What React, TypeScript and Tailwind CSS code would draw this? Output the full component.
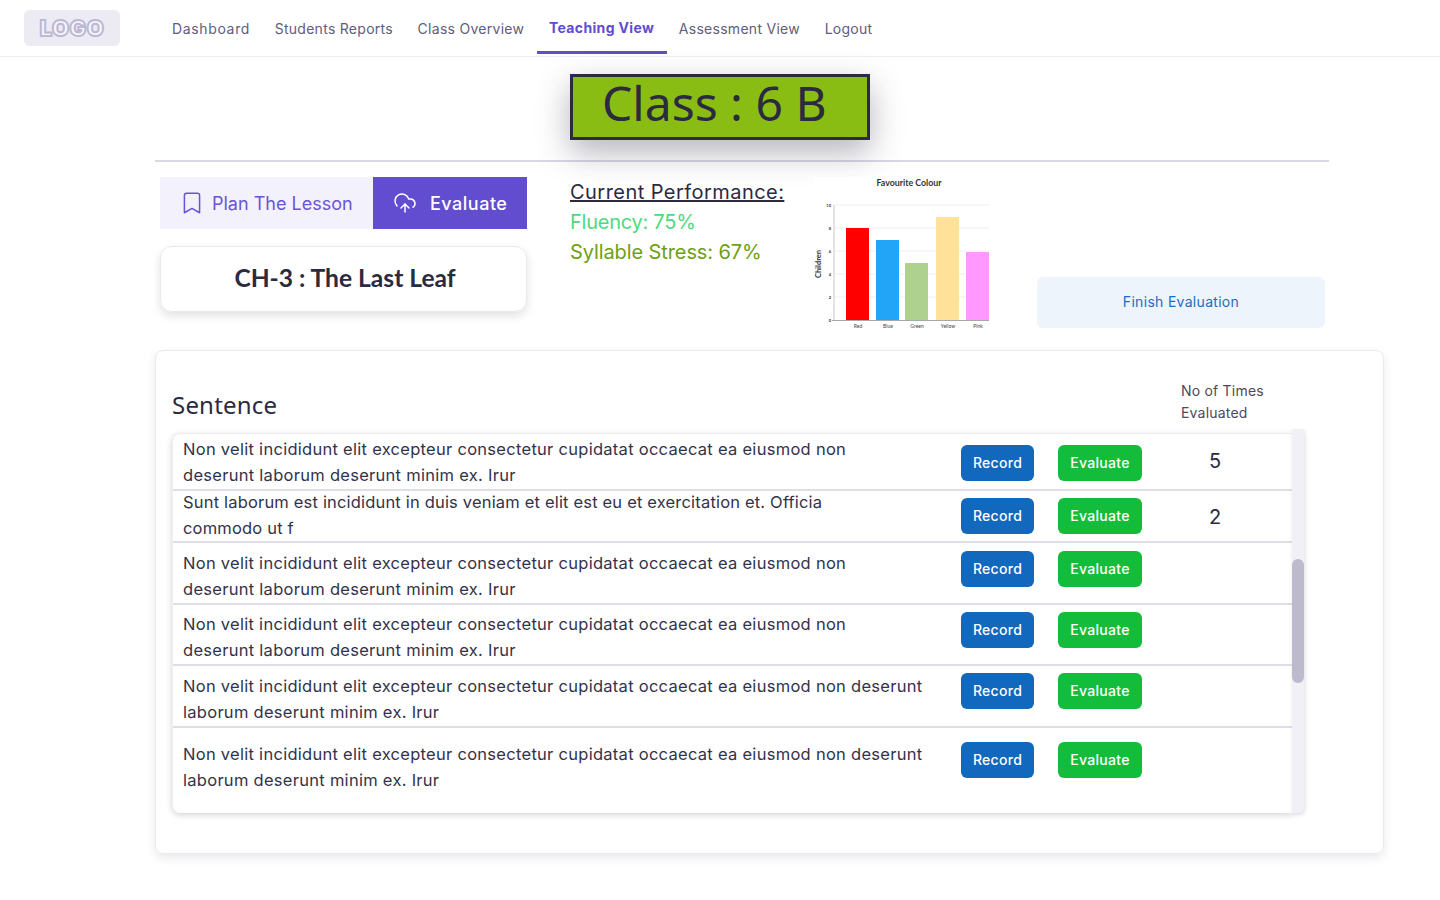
import { Bookmark, CloudUpload } from 'lucide-react';

const LONG_A = 'Non velit incididunt elit excepteur consectetur cupidatat occaecat ea eiusmod non deserunt laborum deserunt minim ex. Irur';
const LONG_B = 'Sunt laborum est incididunt in duis veniam et elit est eu et exercitation et. Officia commodo ut f';

const rows = [
  { text: LONG_A, h: 'h-[57px]', pad: 'pt-[2px]', btn: 'pt-[11px]', count: '5', countPad: 'pt-[11px]', textW: 'w-[680px] tracking-[0.28px]' },
  { text: LONG_B, h: 'h-[52px]', pad: '-mt-[2px]', btn: 'pt-[7px]', count: '2', countPad: 'pt-[10px]', textW: 'w-[680px] tracking-[0.18px]' },
  { text: LONG_A, h: 'h-[62px]', pad: 'pt-[7px]', btn: 'pt-[8px]', count: '', countPad: '', textW: 'w-[680px] tracking-[0.28px]' },
  { text: LONG_A, h: 'h-[61px]', pad: 'pt-[6px]', btn: 'pt-[7px]', count: '', countPad: '', textW: 'w-[680px] tracking-[0.28px]' },
  { text: LONG_A, h: 'h-[62px]', pad: 'pt-[7px]', btn: 'pt-[7px]', count: '', countPad: '', textW: 'w-[760px] tracking-[0.28px]' },
  { text: LONG_A, h: 'h-[86px]', pad: 'pt-[13px]', btn: 'pt-[14px]', count: '', countPad: '', textW: 'w-[760px] tracking-[0.28px]' },
];

const nav = ['Dashboard', 'Students Reports', 'Class Overview', 'Teaching View', 'Assessment View', 'Logout'];

function FavouriteChart() {
  const bars = [
    { x: 32, y: 51, h: 92, c: '#ff0000', l: 'Red' },
    { x: 62, y: 63, h: 80, c: '#22a5f7', l: 'Blue' },
    { x: 91, y: 86, h: 57, c: '#aed18f', l: 'Green' },
    { x: 122, y: 40, h: 103, c: '#ffe199', l: 'Yellow' },
    { x: 152, y: 75, h: 68, c: '#ff99ff', l: 'Pink' },
  ];
  return (
    <svg width="176" height="153" viewBox="0 0 176 153" className="bg-white shrink-0">
      <text x="95" y="9" textAnchor="middle" fontSize="8.8" fontWeight="700" fill="#333" fontFamily="Lato, sans-serif">Favourite Colour</text>
      {[28, 51, 74, 97, 120].map((y) => (
        <line key={y} x1="20" x2="175" y1={y} y2={y} stroke="#eeeeee" />
      ))}
      <line x1="20" x2="20" y1="28" y2="144" stroke="#c8c8c8" />
      <line x1="18" x2="175" y1="143.5" y2="143.5" stroke="#a8a8a8" />
      {bars.map((b) => (
        <g key={b.l}>
          <rect x={b.x} y={b.y} width="23" height={b.h} fill={b.c} />
          <text x={b.x + 12} y="151" textAnchor="middle" fontSize="5" fill="#444" fontFamily="Lato, sans-serif">{b.l}</text>
        </g>
      ))}
      {[['10', 30], ['8', 53], ['6', 76], ['4', 99], ['2', 122], ['0', 145]].map(([t, y]) => (
        <text key={t} x="17" y={y} textAnchor="end" fontSize="4" fontWeight="700" fill="#333" fontFamily="Lato, sans-serif">{t}</text>
      ))}
      <text transform="translate(7 87) rotate(-90)" textAnchor="middle" fontSize="7.5" fontWeight="700" fill="#333" fontFamily="Lato, sans-serif">Children</text>
    </svg>
  );
}

export default function App() {
  return (
    <div className="min-h-[900px] bg-white text-[#2b2a3f] font-['Inter',sans-serif]">
      {/* top nav */}
      <header className="flex h-[57px] items-start border-b border-[#efeff3] pl-6">
        <div className="mt-[10px] flex h-9 w-24 items-center justify-center rounded-md bg-[#ecebf3]">
          <span className="font-['Inter',sans-serif] text-[22px] font-black tracking-[0.5px] text-[#f6f5fa] [-webkit-text-stroke:2px_#bdb9d4]">LOGO</span>
        </div>
        <nav className="ml-[39.7px] flex h-[57px] items-start">
          {nav.map((n) => (
            <a
              key={n}
              className={
                n === 'Teaching View'
                  ? 'flex h-[54px] items-center border-b-[3px] border-[#624ccf] px-[12.3px] pt-[4px] text-[14px] font-bold tracking-[0.35px] text-[#624ccf]'
                  : n === 'Dashboard'
                    ? 'flex h-[54px] items-center px-[12.3px] pt-[2px] text-[14px] tracking-[0.65px] text-[#5f5c7c]'
                    : 'flex h-[54px] items-center px-[12.3px] pt-[2px] text-[14px] tracking-[0.28px] text-[#5f5c7c]'
              }
            >
              {n}
            </a>
          ))}
        </nav>
      </header>

      <div className="mt-[17px] flex justify-center">
        <div className="flex h-[66px] w-[300px] items-center border-[3px] border-[#2b2a3f] bg-[#8abd14] pb-[8px] pl-[29px] font-['Noto_Sans',sans-serif] text-[48px] shadow-[0_12px_32px_rgba(40,40,60,0.35)]">
          Class : 6 B
        </div>
      </div>

      <div className="ml-[155px] mt-5 h-[2px] w-[1174px] bg-[#d9d7e6]" />

      {/* lesson row */}
      <div className="ml-[155px] mt-[15px] flex h-[173px] w-[1229px] items-start">
        <div className="ml-[5px] w-[367px]">
          <div className="flex h-[52px]">
            <button className="flex w-[213px] items-center gap-[7px] bg-[#f3f1fb] pl-[19px] text-[18px] text-[#6a55d6]">
              <Bookmark size={26} strokeWidth={1.4} />
              Plan The Lesson
            </button>
            <button className="flex w-[154px] items-center gap-[13px] bg-[#624ccf] pl-[20px] text-[18px] font-medium tracking-[0.5px] text-white">
              <CloudUpload size={24} strokeWidth={1.5} />
              Evaluate
            </button>
          </div>
          <div className="mt-[17px] flex h-[66px] items-center justify-center rounded-xl border border-[#e9e9ef] pb-[2px] pl-[3px] font-['Lato',sans-serif] text-[24.6px] font-bold shadow-[0_4px_8px_rgba(40,40,60,0.14)]">
            CH-3 : The Last Leaf
          </div>
        </div>

        <div className="ml-[43px] w-[244px] text-[20px] leading-[30px]">
          <p className="tracking-[0.45px] underline">Current Performance:</p>
          <p className="tracking-[-0.25px] text-[#4fd97f]">Fluency: 75%</p>
          <p className="tracking-[-0.1px] text-[#6f9f14]">Syllable Stress: 67%</p>
        </div>

        <FavouriteChart />

        <button className="ml-[47px] mt-[100px] h-[51px] w-[288px] rounded-md bg-[#eef4fc] pb-[2px] text-[14px] tracking-[0.3px] text-[#1b6ec2]">
          Finish Evaluation
        </button>
      </div>

      {/* sentence card */}
      <section className="ml-[155px] h-[504px] w-[1229px] rounded-lg border border-[#e9e9ef] pl-4 shadow-[0_4px_10px_rgba(40,40,60,0.1)]">
        <div className="flex h-[78px] w-[1132px] items-start">
          <h2 className="mt-[37px] w-[1009px] font-['Noto_Sans',sans-serif] text-[24px] leading-[34px] tracking-[0.2px]">Sentence</h2>
          <p className="mt-[29px] text-[14px] leading-[22px] tracking-[0.2px] text-[#4b4a5e]">
            No of Times
            <br />
            Evaluated
          </p>
        </div>
        <div className="relative flex h-[384px] w-[1132px] items-end">
          <div className="h-[380px] w-[1120px] overflow-hidden rounded-l-lg border-t border-l border-[#ececf1] shadow-[0_2px_6px_rgba(40,40,60,0.2)]">
            {rows.map((r, i) => (
              <div key={i} className={`flex ${r.h} ${i < 5 ? 'border-b-2 border-[#dfdde8]' : ''}`}>
                <div className={`${r.pad} w-[788px] pl-[10px]`}>
                  <p className={`${r.textW} text-[16.5px] leading-[26px] text-[#33324a]`}>{r.text}</p>
                </div>
                <div className={`${r.btn} flex gap-6`}>
                  <button className="h-9 w-[73px] rounded-md bg-[#1168bd] pb-[2px] text-[14px] font-medium tracking-[0.3px] text-white">Record</button>
                  <button className="h-9 w-[84px] rounded-md bg-[#13bd3b] pb-[2px] text-[14px] font-medium tracking-[0.3px] text-white">Evaluate</button>
                </div>
                {r.count && <span className={`ml-[67px] ${r.countPad} text-[20px] leading-[32px]`}>{r.count}</span>}
              </div>
            ))}
          </div>
          <div className="h-[384px] w-3 rounded-br-md bg-[#f1f0f6] pt-[130px] shadow-[1px_2px_4px_rgba(40,40,60,0.15)]">
            <div className="h-[124px] w-3 rounded-md bg-[#bdbacd]" />
          </div>
        </div>
      </section>
    </div>
  );
}
